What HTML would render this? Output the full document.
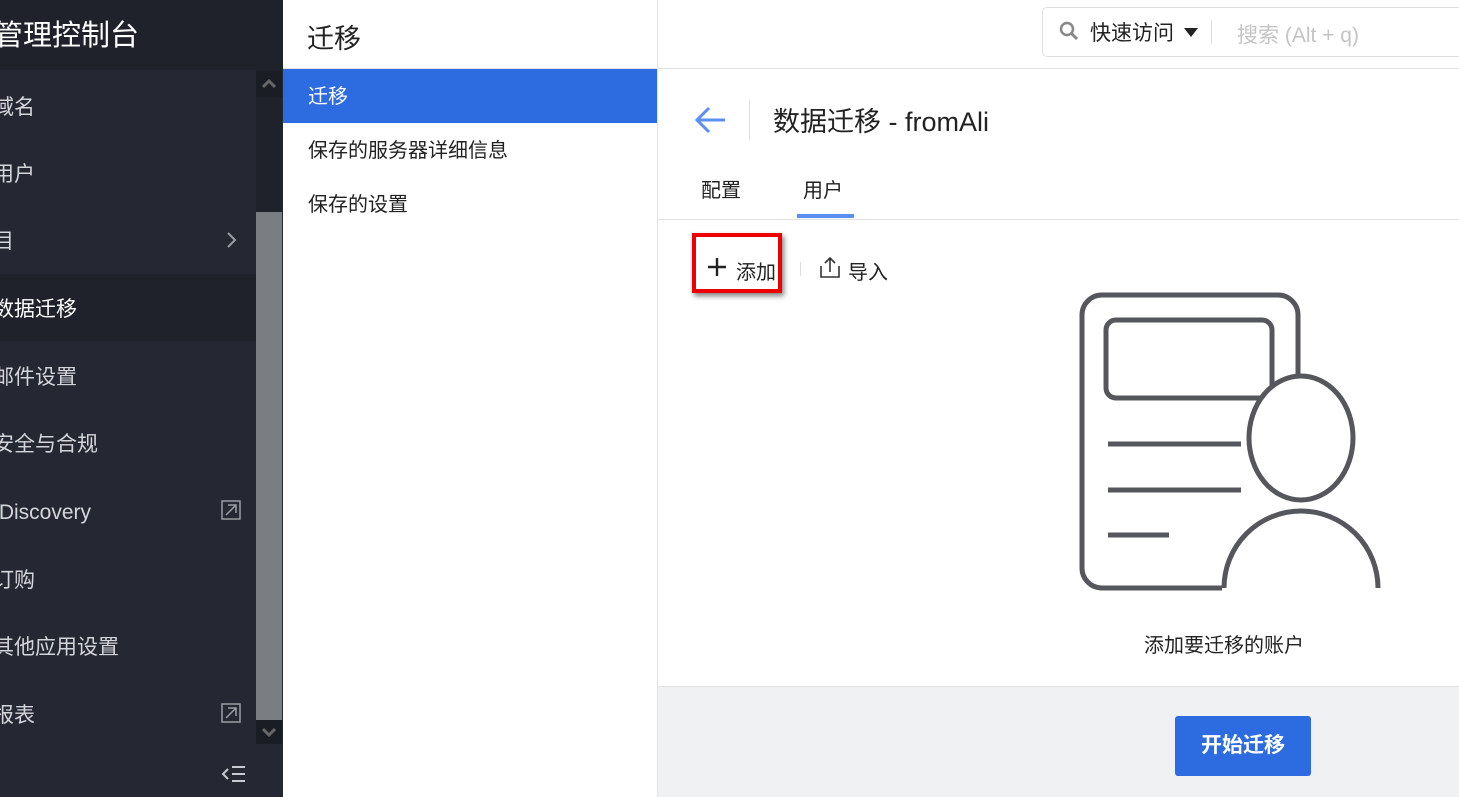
<!DOCTYPE html>
<html><head><meta charset="utf-8"><style>
*{margin:0;padding:0;box-sizing:border-box}
body{width:1459px;height:797px;overflow:hidden;font-family:"Liberation Sans","Noto Sans CJK SC",sans-serif;background:#fff;position:relative}
.sb{position:absolute;left:0;top:0;width:283px;height:797px;background:#252833}
.sbh{position:absolute;left:-6px;top:1px;width:289px;height:70px;color:#fff;font-size:29px;line-height:70px;white-space:nowrap}
.it{position:absolute;left:-7px;width:263px;height:67px;color:#d4d6da;font-size:21px;line-height:71px;white-space:nowrap}
.act{background:#1f222b;color:#fff}
.ext{position:absolute;left:228px;top:23px}
.track{position:absolute;left:256px;top:70px;width:26px;height:674px;background:#1f222b}
.thumb{position:absolute;left:256px;top:212px;width:26px;height:508px;background:#7a7d82}
.mid{position:absolute;left:283px;top:0;width:375px;height:797px;border-right:1px solid #e2e2e2}
.top{position:absolute;left:283px;top:0;width:1176px;height:69px;border-bottom:1px solid #e2e2e2;background:#fff}
.mi{position:absolute;left:283px;width:374px;height:54px;line-height:57px;padding-left:25px;font-size:20px;color:#222}
.foot{position:absolute;left:658px;top:686px;width:801px;height:111px;background:#f0f1f3;border-top:1px solid #e2e2e2}
</style></head><body>
<div class="sb"></div>
<div style="position:absolute;left:0;top:0;width:283px;height:70px;background:#1f222b"></div>
<div class="sbh">管理控制台</div>
<div class="it" style="top:72px">域名</div>
<div class="it" style="top:139px">用户</div>
<div class="it" style="top:206px">目<svg style="position:absolute;left:233px;top:25px" width="12" height="18"><path d="M2 2L9 9L2 16" fill="none" stroke="#9a9da3" stroke-width="2"/></svg></div>
<div class="it act" style="top:274px">数据迁移</div>
<div class="it" style="top:342px">邮件设置</div>
<div class="it" style="top:409px">安全与合规</div>
<div class="it" style="top:477px">&nbsp;Discovery<svg class="ext" width="20" height="20"><rect x="1" y="1" width="18" height="18" fill="none" stroke="#9a9da3" stroke-width="1.5"/><path d="M5 15L15 5M7 5H15V13" fill="none" stroke="#9a9da3" stroke-width="1.5"/></svg></div>
<div class="it" style="top:545px">订购</div>
<div class="it" style="top:612px">其他应用设置</div>
<div class="it" style="top:680px">报表<svg class="ext" width="20" height="20"><rect x="1" y="1" width="18" height="18" fill="none" stroke="#9a9da3" stroke-width="1.5"/><path d="M5 15L15 5M7 5H15V13" fill="none" stroke="#9a9da3" stroke-width="1.5"/></svg></div>
<div class="track"></div>
<div class="thumb"></div>
<div style="position:absolute;left:256px;top:71px;width:26px;height:26px;background:#1b1d24"><svg width="26" height="26"><path d="M7 16L13 10L19 16" fill="none" stroke="#666" stroke-width="3"/></svg></div>
<div style="position:absolute;left:256px;top:720px;width:26px;height:24px;background:#1b1d24"><svg width="26" height="24"><path d="M7 9L13 15L19 9" fill="none" stroke="#666" stroke-width="3"/></svg></div>
<svg style="position:absolute;left:221px;top:764px" width="26" height="20"><path d="M7 5L2 10L7 15M11 3H24M11 10H24M11 17H24" fill="none" stroke="#c8cacf" stroke-width="2"/></svg>

<div class="top"></div>
<div style="position:absolute;left:307px;top:17px;font-size:27px;color:#222">迁移</div>
<div style="position:absolute;left:1042px;top:7px;width:430px;height:50px;border:1px solid #e0e0e0;border-radius:5px"></div>
<svg style="position:absolute;left:1058px;top:20px" width="22" height="22"><circle cx="9" cy="9" r="6" fill="none" stroke="#888" stroke-width="2.5"/><line x1="13.5" y1="13.5" x2="19" y2="19" stroke="#888" stroke-width="3"/></svg>
<div style="position:absolute;left:1090px;top:17px;font-size:21px;color:#222">快速访问</div>
<svg style="position:absolute;left:1183px;top:27px" width="16" height="12"><path d="M1 1H15L8 10Z" fill="#222"/></svg>
<div style="position:absolute;left:1211px;top:20px;width:1px;height:24px;background:#ddd"></div>
<div style="position:absolute;left:1237px;top:19px;font-size:21px;color:#c4c4c4">搜索 (Alt + q)</div>

<div class="mid"></div>
<div class="mi" style="top:69px;background:#2d6be0;color:#fff">迁移</div>
<div class="mi" style="top:123px">保存的服务器详细信息</div>
<div class="mi" style="top:177px">保存的设置</div>

<svg style="position:absolute;left:694px;top:106px" width="34" height="28"><path d="M3 14H31M15 2L3 14L15 26" fill="none" stroke="#5b8ff0" stroke-width="3"/></svg>
<div style="position:absolute;left:749px;top:100px;width:1px;height:40px;background:#ddd"></div>
<div style="position:absolute;left:773px;top:100px;font-size:27px;color:#222">数据迁移 - fromAli</div>
<div style="position:absolute;left:701px;top:174px;font-size:20px;color:#222">配置</div>
<div style="position:absolute;left:803px;top:174px;font-size:20px;color:#222">用户</div>
<div style="position:absolute;left:797px;top:214px;width:57px;height:4px;background:#5b8ff0"></div>
<div style="position:absolute;left:658px;top:219px;width:801px;height:1px;background:#e2e2e2"></div>

<div style="position:absolute;left:692px;top:233px;width:90px;height:60px;border:4px solid #e00;box-shadow:2px 3px 5px rgba(0,0,0,.5)"></div>
<svg style="position:absolute;left:707px;top:257px" width="20" height="20"><path d="M10 1V19M1 10H19" stroke="#222" stroke-width="2.4"/></svg>
<div style="position:absolute;left:736px;top:256px;font-size:20px;color:#222">添加</div>
<div style="position:absolute;left:800px;top:262px;width:1px;height:14px;background:#ddd"></div>
<svg style="position:absolute;left:818px;top:255px" width="24" height="24"><path d="M3 11V22H21V11M12 17V3M7 8L12 3L17 8" fill="none" stroke="#333" stroke-width="1.6"/></svg>
<div style="position:absolute;left:848px;top:256px;font-size:20px;color:#222">导入</div>

<svg style="position:absolute;left:1075px;top:290px" width="320" height="310" fill="none" stroke="#55575d" stroke-width="5">
<path d="M223 100V25a20 20 0 0 0-20-20H27a20 20 0 0 0-20 20v253a20 20 0 0 0 20 20h120"/>
<rect x="31" y="30" width="166" height="78" rx="10"/>
<line x1="33" y1="154" x2="166" y2="154"/><line x1="33" y1="200" x2="166" y2="200"/><line x1="33" y1="245" x2="94" y2="245"/>
<ellipse cx="226" cy="148" rx="52" ry="62" fill="#fff"/>
<path d="M149 298a77 77 0 0 1 154 0" fill="#fff"/>
</svg>
<div style="position:absolute;left:1144px;top:629px;font-size:20px;color:#222">添加要迁移的账户</div>

<div class="foot"></div>
<div style="position:absolute;left:1175px;top:716px;width:136px;height:60px;background:#2d6be0;border-radius:3px;color:#fff;font-size:21px;font-weight:bold;text-align:center;line-height:60px">开始迁移</div>
</body></html>
